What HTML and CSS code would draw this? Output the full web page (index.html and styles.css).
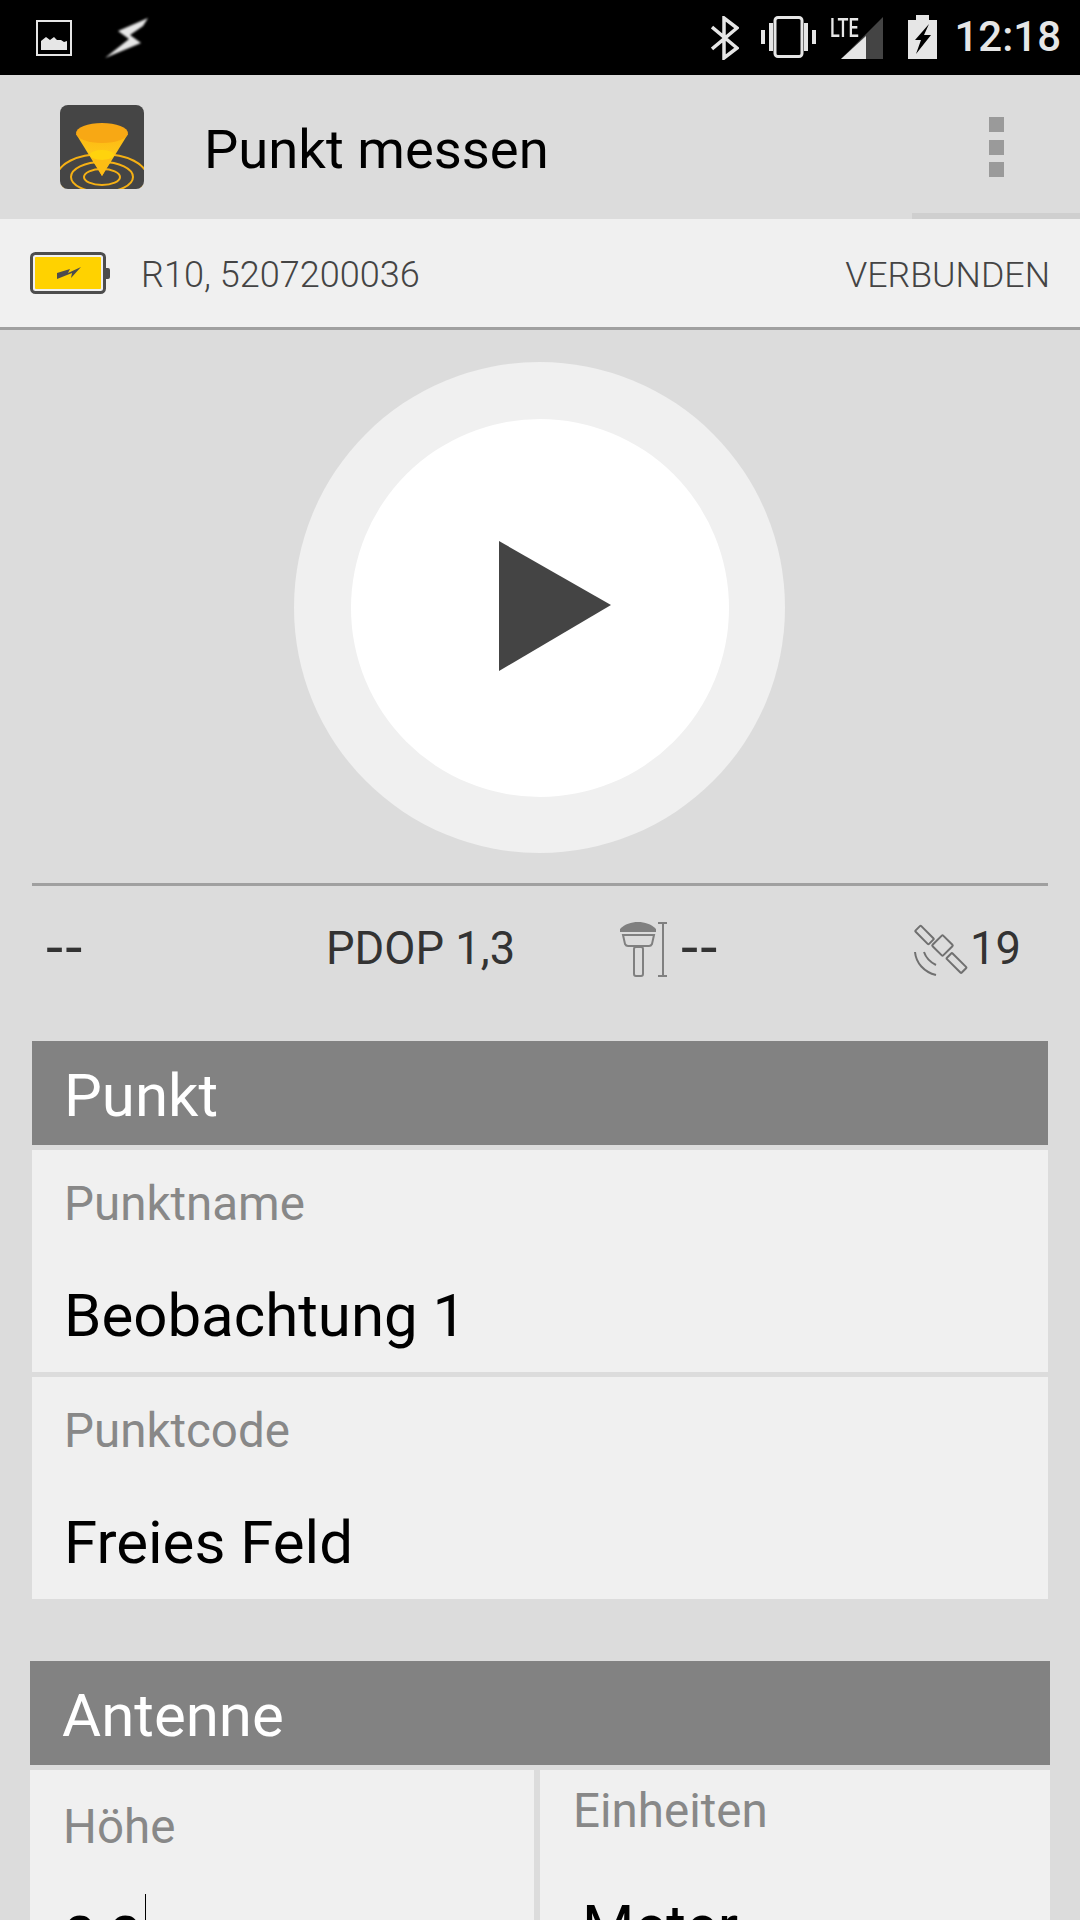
FILE: index.html
```html
<!DOCTYPE html>
<html lang="de">
<head>
    <meta charset="UTF-8">
    <meta name="viewport" content="width=device-width, initial-scale=1.0">
    <title>Punkt messen</title>
    <link rel="stylesheet" href="styles.css">
</head>
<body>
    <div class="screen">
        <div class="statusbar">
            <div class="status-left">
                <svg class="ic-image" width="36" height="36" viewBox="0 0 36 36">
                    <rect x="1" y="1" width="34" height="34" fill="none" stroke="#e6e6e6" stroke-width="2"/>
                    <path d="M5 30V21L10 17L14 20L18 17L21 20L25 20L28 22L31 21V30Z" fill="#e6e6e6"/>
                </svg>
                <svg class="ic-bolt" width="44" height="40" viewBox="0 0 44 40">
                    <path d="M43 0L13 13L24 21L0 40L36 25L25 17L38 8Z" fill="#e6e6e6"/>
                </svg>
            </div>
            <div class="status-right">
                <svg class="ic-bt" width="28" height="44" viewBox="0 0 28 44">
                    <path d="M1 11L26 32L13 42V2L26 12L1 33" fill="none" stroke="#e6e6e6" stroke-width="3.5"/>
                </svg>
                <svg class="ic-vib" width="55" height="42" viewBox="0 0 55 42">
                    <rect x="14" y="1.500" width="27" height="39" rx="3" fill="none" stroke="#e6e6e6" stroke-width="3"/>
                    <path d="M0 14h4v14h-4zM8 7h4v28h-4zM43 7h4v28h-4zM51 14h4v14h-4z" fill="#e6e6e6"/>
                </svg>
                <div class="signal">
                    <svg width="42" height="42" viewBox="0 0 42 42">
                        <path d="M42 0V42H0Z" fill="#444"/>
                        <path d="M25 19V42H0Z" fill="#e6e6e6"/>
                    </svg>
                    <span class="lte">LTE</span>
                </div>
                <svg class="ic-batt" width="29" height="44" viewBox="0 0 29 44">
                    <path d="M0 5H8V0H21V5H29V44H0Z" fill="#e6e6e6"/>
                    <path d="M21 9L7 25H13L8 39L23 20H16Z" fill="#000"/>
                </svg>
                <span class="clock">12:18</span>
            </div>
        </div>

        <div class="appbar">
            <svg class="logo" width="84" height="84" viewBox="0 0 84 84">
                <defs>
                    <linearGradient id="cone" x1="0" y1="0" x2="0" y2="1">
                        <stop offset="0" stop-color="#fdb813"/>
                        <stop offset="0.6" stop-color="#fecb1a"/>
                        <stop offset="1" stop-color="#f9a815"/>
                    </linearGradient>
                    <clipPath id="logoclip"><rect width="84" height="84" rx="8"/></clipPath>
                </defs>
                <g clip-path="url(#logoclip)">
                    <rect width="84" height="84" fill="#454545"/>
                    <g fill="none" stroke="#f5b014" stroke-width="2">
                        <ellipse cx="42" cy="72" rx="18" ry="8"/>
                        <ellipse cx="42" cy="72" rx="31" ry="15"/>
                        <ellipse cx="42" cy="72" rx="45" ry="23"/>
                    </g>
                    <path d="M16 29L42 71L68 29Z" fill="url(#cone)"/>
                    <ellipse cx="42" cy="50" rx="12" ry="5" fill="#ffd30d"/>
                    <path d="M30 50A12 5 0 0 0 54 50L42 71Z" fill="#fdbd14"/>
                    <ellipse cx="42" cy="28" rx="26" ry="10" fill="#f8a814"/>
                </g>
            </svg>
            <span class="title">Punkt messen</span>
            <div class="overflow">
                <i></i><i></i><i></i>
            </div>
        </div>

        <div class="device">
            <svg class="device-batt" width="80" height="42" viewBox="0 0 80 42">
                <rect x="1.500" y="1.500" width="73" height="39" rx="4" fill="none" stroke="#4d4d4d" stroke-width="3"/>
                <rect x="5" y="5" width="66" height="32" rx="1" fill="#ffd200"/>
                <path d="M75 16h3a2 2 0 0 1 2 2v7a2 2 0 0 1-2 2h-3z" fill="#4d4d4d"/>
                <path d="M27 21L40 17L38 21L51 15L41 26L42 21L27 27Z" fill="#4d4d4d"/>
            </svg>
            <span class="device-name">R10, 5207200036</span>
            <span class="device-state">VERBUNDEN</span>
        </div>

        <div class="start">
            <div class="start-ring">
                <div class="start-btn">
                    <svg class="play" width="112" height="130" viewBox="0 0 112 130"><path d="M0 0L112 64L0 130Z" fill="#444"/></svg>
                </div>
            </div>
        </div>

        <div class="stats">
            <span class="stat dashes">--</span>
            <span class="stat">PDOP 1,3</span>
            <div class="stat-group">
                <svg width="48" height="56" viewBox="0 0 48 56" fill="none" stroke="#808080">
                    <path d="M0 8C5 3 11 1 18 1C25 1 31 3 36 8V11H0Z" fill="#808080" stroke="none"/>
                    <path d="M3 14H34L32 23Q31 25 29 25H8Q6 25 5 23Z" stroke-width="2"/>
                    <rect x="14" y="26" width="9" height="29" rx="2" stroke-width="2"/>
                    <path d="M43 2V55M38 2H47M38 55H47" stroke-width="2"/>
                </svg>
                <span class="stat dashes">--</span>
            </div>
            <div class="stat-group sats">
                <svg width="54" height="54" viewBox="0 0 54 54" fill="none" stroke="#707070" stroke-width="2">
                    <rect x="1" y="9" width="19" height="8" rx="1" transform="rotate(45 10.500 13)"/>
                    <rect x="21" y="16" width="15" height="15" rx="1" transform="rotate(45 28.500 23.500)"/>
                    <rect x="32" y="37" width="21" height="8" rx="1" transform="rotate(45 42.500 41)"/>
                    <path d="M1 30C2 41 10 50 22 53M10 30C12 36 16 40 22 43"/>
                </svg>
                <span class="stat">19</span>
            </div>
        </div>

        <section class="panel panel-punkt">
            <h2 class="panel-head">Punkt</h2>
            <div class="field">
                <span class="field-label">Punktname</span>
                <span class="field-value">Beobachtung 1</span>
            </div>
            <div class="field">
                <span class="field-label">Punktcode</span>
                <span class="field-value">Freies Feld</span>
            </div>
        </section>

        <section class="panel panel-antenne">
            <h2 class="panel-head">Antenne</h2>
            <div class="split">
                <div class="field field-height">
                    <span class="field-label">Höhe</span>
                    <span class="field-value">0,0<span class="cursor"></span></span>
                </div>
                <div class="field field-units">
                    <span class="field-label">Einheiten</span>
                    <span class="field-value">Meter</span>
                </div>
            </div>
        </section>
    </div>
</body>
</html>
```

FILE: styles.css
```css
html, body { margin: 0; padding: 0; }
body { font-family: Roboto, "Liberation Sans", sans-serif; background: #dcdcdc; }
.screen { width: 1080px; height: 1920px; overflow: hidden; background: #dcdcdc; }

.statusbar { height: 75px; background: #000; display: flex; justify-content: space-between; }
.status-left { display: flex; padding: 18px 0 0 36px; }
.ic-image { margin-top: 2px; }
.ic-bolt { margin-left: 33px; filter: blur(1px); }
.status-right { display: flex; padding: 15px 19px 0 0; }
.ic-bt { margin: 1px 22px 0 0; }
.ic-vib { margin: 1px 25px 0 0; }
.signal { position: relative; width: 42px; height: 44px; margin: 2px 25px 0 0; }
.lte { position: absolute; left: -11px; top: -1px; font-size: 25px; font-weight: 500; line-height: 25px; color: #e6e6e6; transform: scaleX(0.72); transform-origin: left top; }
.clock { font-size: 42px; line-height: 44px; color: #e6e6e6; margin-left: 17px; font-weight: 500; }

.appbar { height: 144px; display: flex; align-items: center; position: relative; }
.logo { margin-left: 60px; }
.title { font-size: 54.400px; margin: 4px 0 0 60px; color: #000; }
.overflow { position: absolute; right: 0; top: 0; width: 168px; height: 144px; border-bottom: 6px solid #cfcfcf; box-sizing: border-box; display: flex; flex-direction: column; align-items: center; padding: 42px 0 0 0; gap: 7.500px; }
.overflow i { display: block; width: 15px; height: 15px; background: #9a9a9a; }

.device { height: 108px; background: #f0f0f0; border-bottom: 3px solid #a0a0a0; display: flex; align-items: center; padding: 0 30px; }
.device-name { font-size: 36.100px; font-weight: 300; color: #444; margin: 4px 0 0 31px; }
.device-state { font-size: 35.700px; font-weight: 300; color: #444; margin: 4px 0 0 auto; }

.start { display: flex; justify-content: center; padding-top: 32px; }
.start-ring { width: 491px; height: 491px; margin-right: 2px; border-radius: 50%; background: #f0f0f0; display: flex; align-items: center; justify-content: center; }
.start-btn { width: 378px; height: 378px; margin-left: 1px; border-radius: 50%; background: #fff; display: flex; align-items: center; justify-content: center; padding-left: 30px; box-sizing: border-box; }
.play { margin-bottom: 4px; }

.stats { margin: 30px 32px 0 32px; border-top: 3px solid #a0a0a0; height: 155px; box-sizing: content-box; display: grid; grid-template-columns: 281px 294px 294px auto; align-items: center; padding-left: 13px; }
.stat { font-size: 45.300px; color: #333; margin-bottom: 30px; }
.dashes { font-weight: 500; transform: scaleX(1.25); transform-origin: left center; }
.stat-group { display: flex; align-items: center; gap: 12px; margin-bottom: 30px; }
.stat-group .stat { margin-bottom: 0; }
.sats { gap: 2px; }

.panel-head { margin: 0; height: 104px; background: #828282; color: #fff; font-size: 60px; font-weight: 400; line-height: 110px; }
.field { background: #f0f0f0; margin-top: 5px; height: 222px; display: flex; flex-direction: column; box-sizing: border-box; }
.field-label { font-size: 47.500px; color: #888; }
.field-value { font-size: 60px; color: #000; margin-top: 47.500px; position: relative; }

.panel-punkt { margin: 0 32px; }
.panel-punkt .panel-head { padding-left: 32px; }
.panel-punkt .field { padding: 26px 0 0 32px; }
.panel-antenne { margin: 61.500px 30px 0 30px; }
.panel-antenne .panel-head { padding-left: 32px; }
.split { display: grid; grid-template-columns: 504px 510px; gap: 6px; }
.field-height { padding: 29px 0 0 33px; }
.field-units { padding: 13px 0 0 33px; }
.field-units .field-value { margin: 52px 0 0 9px; }
.cursor { position: absolute; left: 82px; top: -8px; width: 1px; height: 70px; background: #000; }
```
